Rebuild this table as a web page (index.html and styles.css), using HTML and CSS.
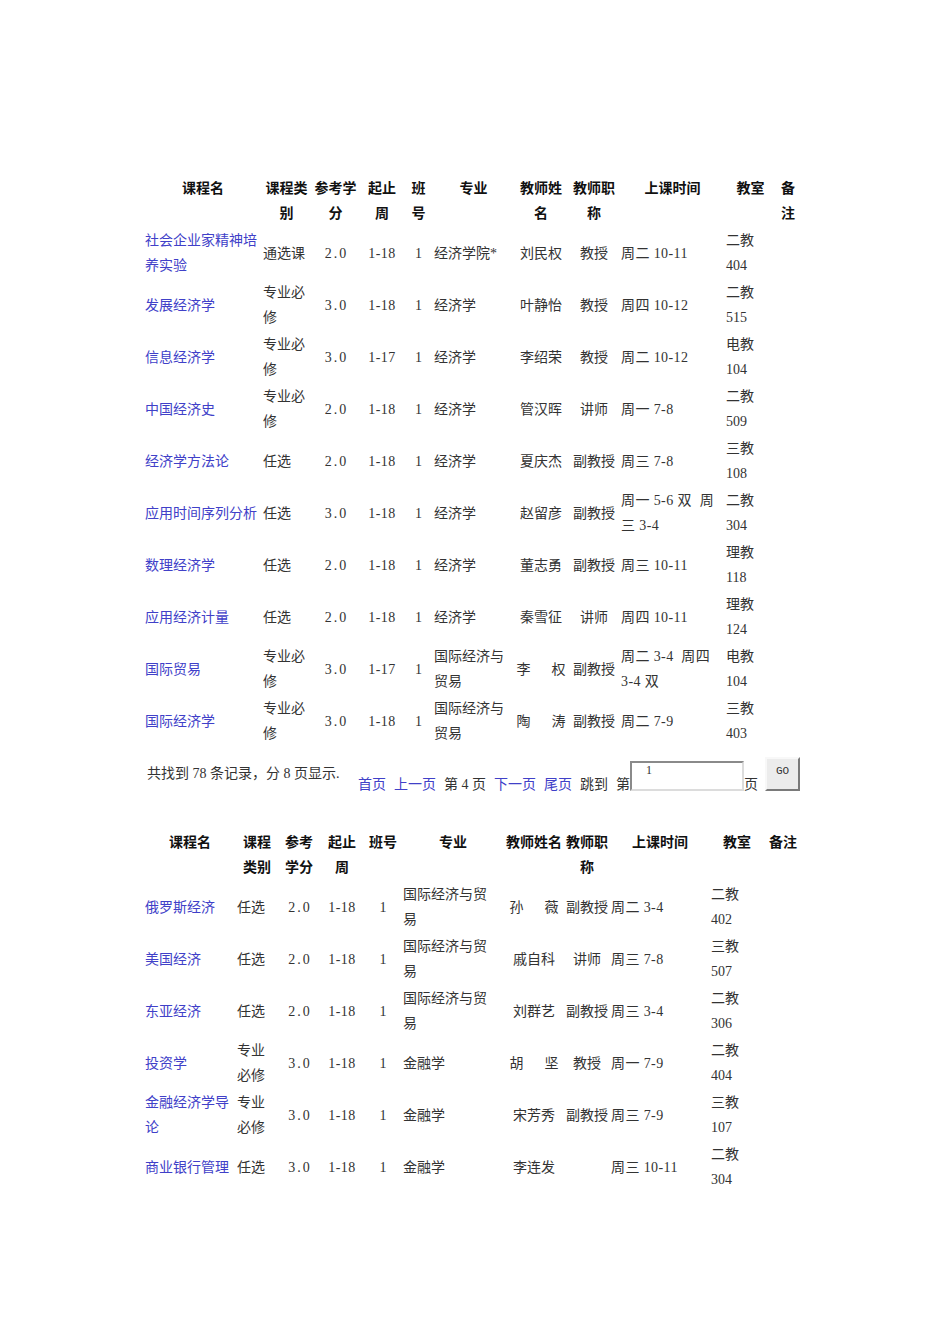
FILE: index.html
```html
<!DOCTYPE html>
<html lang="zh-CN">
<head>
<meta charset="utf-8">
<title>课程列表</title>
<link rel="stylesheet" href="styles.css">
</head>
<body>
<div class="page">
  <table class="courses t1">
    <colgroup>
      <col class="c1"><col class="c2"><col class="c3"><col class="c4"><col class="c5"><col class="c6"><col class="c7"><col class="c8"><col class="c9"><col class="c10"><col class="c11">
    </colgroup>
    <thead>
      <tr>
        <th>课程名</th><th>课程类<br>别</th><th>参考学<br>分</th><th>起止<br>周</th><th>班<br>号</th><th>专业</th><th>教师姓<br>名</th><th>教师职<br>称</th><th>上课时间</th><th>教室</th><th>备<br>注</th>
      </tr>
    </thead>
    <tbody>
      <tr><td><a href="#">社会企业家精神培<br>养实验</a></td><td>通选课</td><td class="ctr num">2.0</td><td class="ctr wk">1-18</td><td class="ctr">1</td><td>经济学院*</td><td class="ctr">刘民权</td><td class="ctr">教授</td><td class="wk">周二 10-11</td><td>二教<br>404</td><td></td></tr>
      <tr><td><a href="#">发展经济学</a></td><td>专业必<br>修</td><td class="ctr num">3.0</td><td class="ctr wk">1-18</td><td class="ctr">1</td><td>经济学</td><td class="ctr">叶静怡</td><td class="ctr">教授</td><td class="wk">周四 10-12</td><td>二教<br>515</td><td></td></tr>
      <tr><td><a href="#">信息经济学</a></td><td>专业必<br>修</td><td class="ctr num">3.0</td><td class="ctr wk">1-17</td><td class="ctr">1</td><td>经济学</td><td class="ctr">李绍荣</td><td class="ctr">教授</td><td class="wk">周二 10-12</td><td>电教<br>104</td><td></td></tr>
      <tr><td><a href="#">中国经济史</a></td><td>专业必<br>修</td><td class="ctr num">2.0</td><td class="ctr wk">1-18</td><td class="ctr">1</td><td>经济学</td><td class="ctr">管汉晖</td><td class="ctr">讲师</td><td class="wk">周一 7-8</td><td>二教<br>509</td><td></td></tr>
      <tr><td><a href="#">经济学方法论</a></td><td>任选</td><td class="ctr num">2.0</td><td class="ctr wk">1-18</td><td class="ctr">1</td><td>经济学</td><td class="ctr">夏庆杰</td><td class="ctr">副教授</td><td class="wk">周三 7-8</td><td>三教<br>108</td><td></td></tr>
      <tr><td><a href="#">应用时间序列分析</a></td><td>任选</td><td class="ctr num">3.0</td><td class="ctr wk">1-18</td><td class="ctr">1</td><td>经济学</td><td class="ctr">赵留彦</td><td class="ctr">副教授</td><td class="wk">周一 5-6 双&nbsp;&nbsp;周<br>三 3-4</td><td>二教<br>304</td><td></td></tr>
      <tr><td><a href="#">数理经济学</a></td><td>任选</td><td class="ctr num">2.0</td><td class="ctr wk">1-18</td><td class="ctr">1</td><td>经济学</td><td class="ctr">董志勇</td><td class="ctr">副教授</td><td class="wk">周三 10-11</td><td>理教<br>118</td><td></td></tr>
      <tr><td><a href="#">应用经济计量</a></td><td>任选</td><td class="ctr num">2.0</td><td class="ctr wk">1-18</td><td class="ctr">1</td><td>经济学</td><td class="ctr">秦雪征</td><td class="ctr">讲师</td><td class="wk">周四 10-11</td><td>理教<br>124</td><td></td></tr>
      <tr><td><a href="#">国际贸易</a></td><td>专业必<br>修</td><td class="ctr num">3.0</td><td class="ctr wk">1-17</td><td class="ctr">1</td><td>国际经济与<br>贸易</td><td class="ctr">李&emsp;&ensp;权</td><td class="ctr">副教授</td><td class="wk">周二 3-4&nbsp;&nbsp;周四<br>3-4 双</td><td>电教<br>104</td><td></td></tr>
      <tr><td><a href="#">国际经济学</a></td><td>专业必<br>修</td><td class="ctr num">3.0</td><td class="ctr wk">1-18</td><td class="ctr">1</td><td>国际经济与<br>贸易</td><td class="ctr">陶&emsp;&ensp;涛</td><td class="ctr">副教授</td><td class="wk">周二 7-9</td><td>三教<br>403</td><td></td></tr>
    </tbody>
  </table>

  <div class="pager">
    <span class="summary">共找到 78 条记录，分 8 页显示.</span>
    <div class="nav">
      <a href="#" class="navtxt">首页</a>
      <a href="#" class="navtxt">上一页</a>
      <span class="navtxt">第 4 页</span>
      <a href="#" class="navtxt">下一页</a>
      <a href="#" class="navtxt">尾页</a>
      <span class="navtxt">跳到</span>
      <span class="jump">
        <span class="navtxt">第</span><input class="pageinput" type="text" value="1"><span class="navtxt">页</span>
      </span>
      <button class="go" type="button">GO</button>
    </div>
  </div>

  <table class="courses t2">
    <colgroup>
      <col class="c1"><col class="c2"><col class="c3"><col class="c4"><col class="c5"><col class="c6"><col class="c7"><col class="c8"><col class="c9"><col class="c10"><col class="c11">
    </colgroup>
    <thead>
      <tr>
        <th>课程名</th><th>课程<br>类别</th><th>参考<br>学分</th><th>起止<br>周</th><th>班号</th><th>专业</th><th>教师姓名</th><th>教师职<br>称</th><th>上课时间</th><th>教室</th><th>备注</th>
      </tr>
    </thead>
    <tbody>
      <tr><td><a href="#">俄罗斯经济</a></td><td>任选</td><td class="ctr num">2.0</td><td class="ctr wk">1-18</td><td class="ctr">1</td><td>国际经济与贸<br>易</td><td class="ctr">孙&emsp;&ensp;薇</td><td class="ctr">副教授</td><td class="wk">周二 3-4</td><td>二教<br>402</td><td></td></tr>
      <tr><td><a href="#">美国经济</a></td><td>任选</td><td class="ctr num">2.0</td><td class="ctr wk">1-18</td><td class="ctr">1</td><td>国际经济与贸<br>易</td><td class="ctr">戚自科</td><td class="ctr">讲师</td><td class="wk">周三 7-8</td><td>三教<br>507</td><td></td></tr>
      <tr><td><a href="#">东亚经济</a></td><td>任选</td><td class="ctr num">2.0</td><td class="ctr wk">1-18</td><td class="ctr">1</td><td>国际经济与贸<br>易</td><td class="ctr">刘群艺</td><td class="ctr">副教授</td><td class="wk">周三 3-4</td><td>二教<br>306</td><td></td></tr>
      <tr><td><a href="#">投资学</a></td><td>专业<br>必修</td><td class="ctr num">3.0</td><td class="ctr wk">1-18</td><td class="ctr">1</td><td>金融学</td><td class="ctr">胡&emsp;&ensp;坚</td><td class="ctr">教授</td><td class="wk">周一 7-9</td><td>二教<br>404</td><td></td></tr>
      <tr><td><a href="#">金融经济学导<br>论</a></td><td>专业<br>必修</td><td class="ctr num">3.0</td><td class="ctr wk">1-18</td><td class="ctr">1</td><td>金融学</td><td class="ctr">宋芳秀</td><td class="ctr">副教授</td><td class="wk">周三 7-9</td><td>三教<br>107</td><td></td></tr>
      <tr><td><a href="#">商业银行管理</a></td><td>任选</td><td class="ctr num">3.0</td><td class="ctr wk">1-18</td><td class="ctr">1</td><td>金融学</td><td class="ctr">李连发</td><td class="ctr"></td><td class="wk">周三 10-11</td><td>二教<br>304</td><td></td></tr>
    </tbody>
  </table>
</div>
</body>
</html>
```

FILE: styles.css
```css
html, body {
  margin: 0;
  padding: 0;
  background: #ffffff;
}

body {
  font-family: "Liberation Serif", "Noto Sans CJK SC", serif;
  font-size: 14px;
  color: #333333;
}

.page {
  padding: 175px 0 120px 144px;
}

a {
  color: #4040c8;
  text-decoration: none;
}

.courses {
  border-collapse: separate;
  border-spacing: 0;
  table-layout: fixed;
}

.courses th,
.courses td {
  padding: 1px;
  line-height: 25px;
  font-size: 14px;
  white-space: nowrap;
  overflow: visible;
}

.courses th {
  font-weight: bold;
  color: #111111;
  text-align: center;
  vertical-align: top;
}

.courses td {
  text-align: left;
  vertical-align: middle;
  font-weight: normal;
}

.courses td.ctr {
  text-align: center;
}

.courses td.num {
  letter-spacing: 2px;
  text-indent: 2px;
}

.courses td.wk {
  letter-spacing: 0.4px;
}

/* first table column widths */
.t1 { width: 656px; }
.t1 .c1 { width: 118px; }
.t1 .c2 { width: 49px; }
.t1 .c3 { width: 49px; }
.t1 .c4 { width: 44px; }
.t1 .c5 { width: 29px; }
.t1 .c6 { width: 81px; }
.t1 .c7 { width: 54px; }
.t1 .c8 { width: 52px; }
.t1 .c9 { width: 105px; }
.t1 .c10 { width: 51px; }
.t1 .c11 { width: 24px; }

/* second table column widths */
.t2 { width: 658px; }
.t2 .c1 { width: 92px; }
.t2 .c2 { width: 42px; }
.t2 .c3 { width: 42px; }
.t2 .c4 { width: 44px; }
.t2 .c5 { width: 38px; }
.t2 .c6 { width: 102px; }
.t2 .c7 { width: 60px; }
.t2 .c8 { width: 46px; }
.t2 .c9 { width: 100px; }
.t2 .c10 { width: 54px; }
.t2 .c11 { width: 38px; }

/* pager */
.pager {
  display: flex;
  align-items: stretch;
  height: 34px;
  margin: 10px 0 38px 0;
  padding-left: 3px;
}

.summary {
  width: 211px;
  align-self: center;
  line-height: 20px;
  white-space: nowrap;
}

.nav {
  display: flex;
  align-items: flex-end;
  gap: 8px;
}

.navtxt {
  line-height: 14px;
  white-space: nowrap;
  margin-bottom: -1px;
}

.jump {
  display: flex;
  align-items: flex-end;
}

.pageinput {
  box-sizing: border-box;
  width: 114px;
  height: 30px;
  margin: 0;
  padding: 0 0 12px 14px;
  border-style: solid;
  border-width: 2px;
  border-color: #8a8a8a #dcdcdc #dcdcdc #8a8a8a;
  background: #ffffff;
  font-family: "Liberation Serif", serif;
  font-size: 12px;
  color: #333333;
  outline: none;
}

.go {
  box-sizing: border-box;
  width: 35px;
  height: 34px;
  margin: 0 0 0 -1px;
  padding: 0 0 6px 0;
  border-style: solid;
  border-width: 2px;
  border-color: #f8f8f8 #7a7a7a #7a7a7a #f8f8f8;
  background: #ececec;
  font-family: "Liberation Mono", monospace;
  font-size: 11px;
  color: #333333;
}
```
